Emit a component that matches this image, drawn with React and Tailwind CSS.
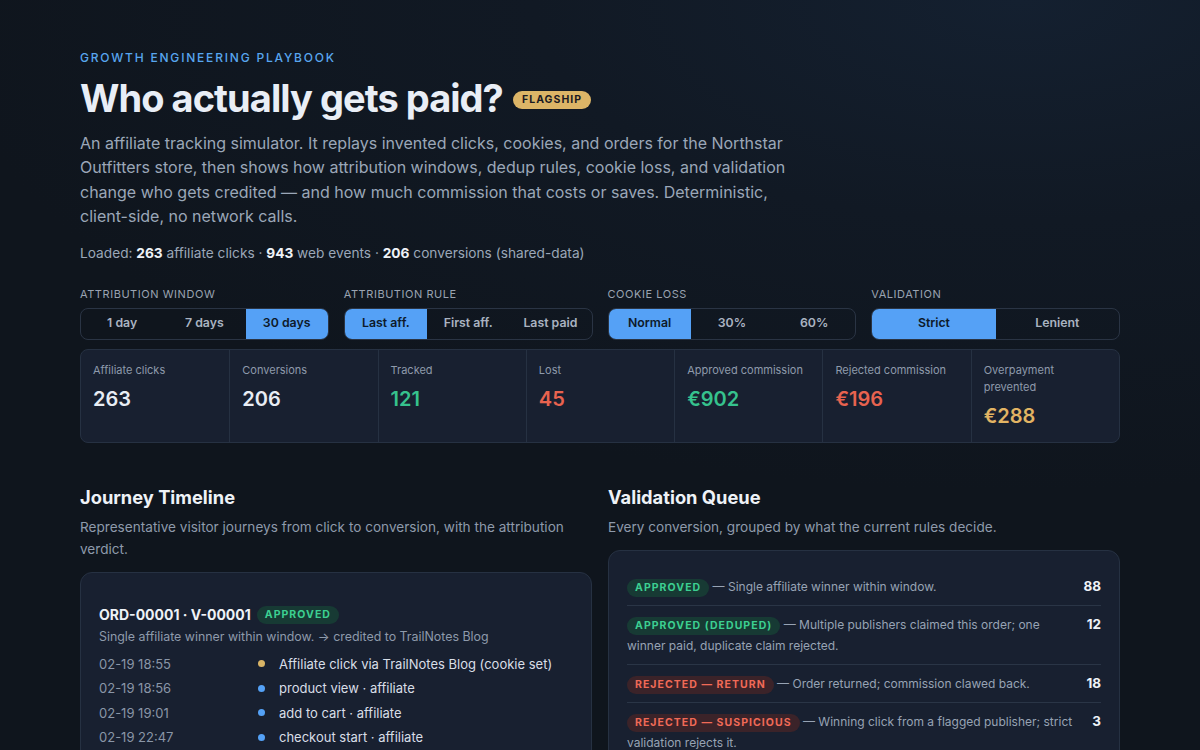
import React from "react";

const controls = [
  { label: "Attribution window", options: ["1 day", "7 days", "30 days"], active: 2 },
  { label: "Attribution rule", options: ["Last aff.", "First aff.", "Last paid"], active: 0 },
  { label: "Cookie loss", options: ["Normal", "30%", "60%"], active: 0 },
  { label: "Validation", options: ["Strict", "Lenient"], active: 0 },
];

const stats = [
  { label: "Affiliate clicks", value: "263", tone: "text-[#e8edf4]" },
  { label: "Conversions", value: "206", tone: "text-[#e8edf4]" },
  { label: "Tracked", value: "121", tone: "text-[#36c28d]" },
  { label: "Lost", value: "45", tone: "text-[#e8634f]" },
  { label: "Approved commission", value: "€902", tone: "text-[#36c28d]" },
  { label: "Rejected commission", value: "€196", tone: "text-[#e8634f]" },
  { label: "Overpayment prevented", value: "€288", tone: "text-[#e2b463]" },
];

const journey = [
  { t: "02-19 18:55", kind: "click", text: "Affiliate click via TrailNotes Blog (cookie set)" },
  { t: "02-19 18:56", kind: "event", text: "product view · affiliate" },
  { t: "02-19 19:01", kind: "event", text: "add to cart · affiliate" },
  { t: "02-19 22:47", kind: "event", text: "checkout start · affiliate" },
];

const queue = [
  { tag: "Approved", ok: true, text: "Single affiliate winner within window.", n: 88 },
  {
    tag: "Approved (deduped)",
    ok: true,
    text: "Multiple publishers claimed this order; one winner paid, duplicate claim rejected.",
    n: 12,
  },
  { tag: "Rejected — return", ok: false, text: "Order returned; commission clawed back.", n: 18 },
  {
    tag: "Rejected — suspicious",
    ok: false,
    text: "Winning click from a flagged publisher; strict validation rejects it.",
    n: 3,
  },
];

function Segmented({ options, active }) {
  return (
    <div className="flex h-[32px] overflow-hidden rounded-lg border border-[#2a3444]">
      {options.map((o, i) => (
        <button
          key={o}
          className={
            "flex-1 text-[12.3px] font-semibold " +
            (i === active ? "bg-[#55a1f6] text-[#0e1a2a]" : "text-[#aab3c1]")
          }
        >
          {o}
        </button>
      ))}
    </div>
  );
}

function Badge({ ok, children }) {
  return (
    <span
      className={
        "inline-block rounded-full px-[8px] py-[1px] text-[10.5px] font-bold uppercase leading-[16px] tracking-[0.1em] " +
        (ok ? "bg-[#173a34] text-[#3ccf91]" : "bg-[#3b2329] text-[#f06a57]")
      }
    >
      {children}
    </span>
  );
}

export default function App() {
  return (
    <div
      className="min-h-screen bg-[#0f151d] bg-[radial-gradient(ellipse_90%_60%_at_85%_0%,#142030_0%,#111924_45%,#0f151d_100%)] text-[#e8edf4]"
      style={{ fontFamily: "Inter, 'Noto Sans', sans-serif" }}
    >
      <div className="mx-auto w-[1040px] pt-[50px] pb-10">
        <div className="text-[12px] font-medium uppercase leading-[16px] tracking-[0.15em] text-[#58a6ef]">
          Growth engineering playbook
        </div>
        <div className="mt-[9px] flex items-center gap-[10px]">
          <h1 className="text-[38px] font-bold leading-[46px] tracking-[-0.025em] text-[#e9eef6]">
            Who actually gets paid?
          </h1>
          <span className="mt-[4px] rounded-full bg-[#dcb567] px-[9px] py-[1px] text-[10.5px] font-bold leading-[16px] tracking-[0.1em] text-[#1a1a22]">
            FLAGSHIP
          </span>
        </div>
        <p className="mt-[10px] max-w-[712px] text-[16px] leading-[24.4px] text-[#9ba7b8]">
          An affiliate tracking simulator. It replays invented clicks, cookies, and orders for the Northstar
          Outfitters store, then shows how attribution windows, dedup rules, cookie loss, and validation change
          who gets credited — and how much commission that costs or saves. Deterministic, client-side, no network
          calls.
        </p>
        <p className="mt-[14px] text-[13.7px] leading-[20px] text-[#9ba7b8]">
          Loaded: <b className="font-bold text-[#eef2f7]">263</b> affiliate clicks ·{" "}
          <b className="font-bold text-[#eef2f7]">943</b> web events ·{" "}
          <b className="font-bold text-[#eef2f7]">206</b> conversions (shared-data)
        </p>

        <div className="mt-[24px] grid grid-cols-4 gap-[15px]">
          {controls.map((c) => (
            <div key={c.label}>
              <div className="mb-[7px] text-[11px] uppercase leading-[14px] tracking-[0.05em] text-[#9aa3b1]">
                {c.label}
              </div>
              <Segmented options={c.options} active={c.active} />
            </div>
          ))}
        </div>

        <div className="mt-[9px] grid grid-cols-7 overflow-hidden rounded-lg border border-[#263142] bg-[#182030]">
          {stats.map((s, i) => (
            <div key={s.label} className={"p-3 " + (i > 0 ? "border-l border-[#263142]" : "")}>
              <div className="text-[11px] leading-[17px] text-[#8e9aab]">{s.label}</div>
              <div className={"mt-[6px] text-[20px] font-semibold leading-[28px] " + s.tone}>{s.value}</div>
            </div>
          ))}
        </div>

        <div className="mt-[40px] grid grid-cols-2 gap-4">
          <section>
            <h2 className="text-[18.3px] font-bold leading-[28px] text-[#eef2f7]">Journey Timeline</h2>
            <p className="mt-[5px] text-[13.6px] leading-[22px] text-[#8e9aab]">
              Representative visitor journeys from click to conversion, with the attribution verdict.
            </p>
            <div className="mt-[12px] rounded-xl border border-[#263142] bg-[#182030] px-[18px] pt-[31px] pb-5">
              <div className="flex items-center gap-[6px]">
                <span className="text-[14px] font-bold leading-[22px] text-[#eef2f7]">ORD-00001 · V-00001</span>
                <Badge ok>Approved</Badge>
              </div>
              <div className="mt-[1px] text-[12.4px] leading-[20px] text-[#8e9aab]">
                Single affiliate winner within window. → credited to TrailNotes Blog
              </div>
              <div className="mt-[5px]">
                {journey.map((j) => (
                  <div key={j.t} className="grid grid-cols-[159px_21px_1fr] items-center leading-[24.5px]">
                    <span className="text-[13px] text-[#8a96a7]">{j.t}</span>
                    <span
                      className={
                        "h-[7px] w-[7px] rounded-full " + (j.kind === "click" ? "bg-[#d9b466]" : "bg-[#54a1f6]")
                      }
                    />
                    <span className="text-[13px] text-[#d8dee7]">{j.text}</span>
                  </div>
                ))}
              </div>
            </div>
          </section>

          <section>
            <h2 className="text-[18.3px] font-bold leading-[28px] text-[#eef2f7]">Validation Queue</h2>
            <p className="mt-[5px] text-[13.6px] leading-[22px] text-[#8e9aab]">
              Every conversion, grouped by what the current rules decide.
            </p>
            <div className="mt-[12px] rounded-xl border border-[#263142] bg-[#182030] px-[18px] py-[17px]">
              {queue.map((q, i) => (
                <div
                  key={q.tag}
                  className={
                    "flex items-start justify-between gap-4 py-2 " + (i > 0 ? "border-t border-[#2a3546]" : "")
                  }
                >
                  <div className="text-[12px] leading-[21px] text-[#97a3b4]">
                    <Badge ok={q.ok}>{q.tag}</Badge> — {q.text}
                  </div>
                  <div className="shrink-0 text-[13.5px] font-bold leading-[21px] text-[#eef2f7]">{q.n}</div>
                </div>
              ))}
            </div>
          </section>
        </div>
      </div>
    </div>
  );
}
